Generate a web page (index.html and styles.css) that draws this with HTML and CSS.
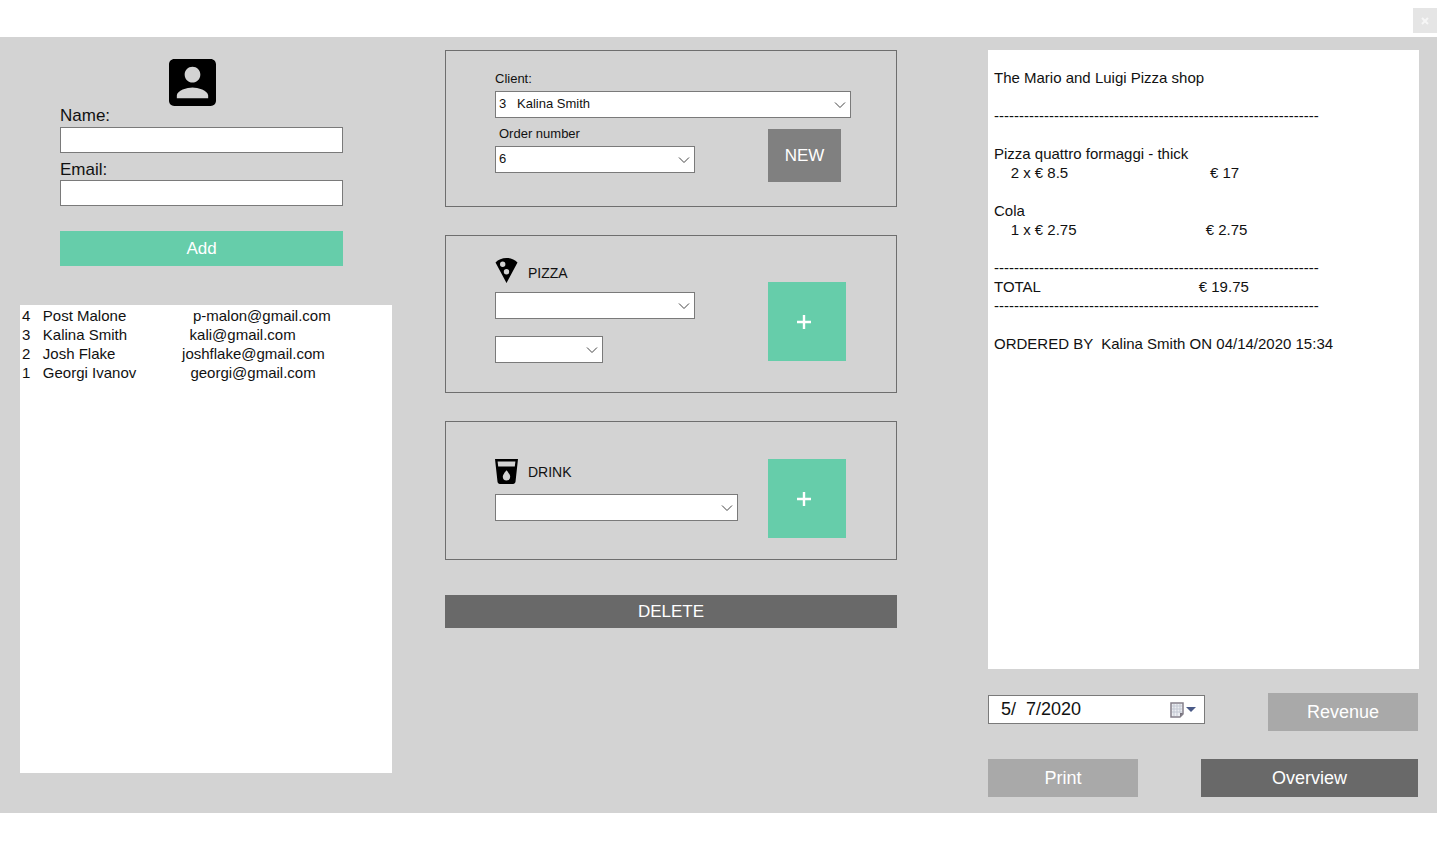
FILE: index.html
```
<!DOCTYPE html>
<html lang="en">
<head>
<meta charset="utf-8">
<title>The Mario and Luigi Pizza shop</title>
<meta name="viewport" content="width=device-width, initial-scale=1">
<link rel="stylesheet" href="styles.css">
</head>
<body>
<header class="titlebar">
  <button class="close" type="button" aria-label="Close"><svg viewBox="0 0 8 8" aria-hidden="true"><path d="M1 1l6 6M7 1L1 7"/></svg></button>
</header>
<main class="workspace">
  <section class="clients">
    <form class="client-form">
      <svg class="avatar" viewBox="3 3 18 18" aria-hidden="true"><path d="M3 5v14c0 1.1.9 2 2 2h14c1.1 0 2-.9 2-2V5c0-1.1-.9-2-2-2H5c-1.1 0-2 .9-2 2zm12 4c0 1.66-1.34 3-3 3s-3-1.34-3-3 1.34-3 3-3 3 1.34 3 3zm-9 8c0-2 4-3.1 6-3.1s6 1.1 6 3.1v1H6v-1z"/></svg>
      <label class="form-label" for="name">Name:</label>
      <input class="field" id="name" type="text">
      <label class="form-label" for="email">Email:</label>
      <input class="field" id="email" type="text">
      <button class="btn btn-add" type="button">Add</button>
    </form>
    <select class="client-list" size="20" aria-label="Clients">
      <option>4&nbsp;&nbsp; Post Malone&nbsp;&nbsp;&nbsp;&nbsp;&nbsp;&nbsp;&nbsp;&nbsp;&nbsp;&nbsp;&nbsp;&nbsp;&nbsp;&nbsp;&nbsp; p-malon@gmail.com</option>
      <option>3&nbsp;&nbsp; Kalina Smith&nbsp;&nbsp;&nbsp;&nbsp;&nbsp;&nbsp;&nbsp;&nbsp;&nbsp;&nbsp;&nbsp;&nbsp;&nbsp;&nbsp; kali@gmail.com</option>
      <option>2&nbsp;&nbsp; Josh Flake&nbsp;&nbsp;&nbsp;&nbsp;&nbsp;&nbsp;&nbsp;&nbsp;&nbsp;&nbsp;&nbsp;&nbsp;&nbsp;&nbsp;&nbsp; joshflake@gmail.com</option>
      <option>1&nbsp;&nbsp; Georgi Ivanov&nbsp;&nbsp;&nbsp;&nbsp;&nbsp;&nbsp;&nbsp;&nbsp;&nbsp;&nbsp;&nbsp;&nbsp; georgi@gmail.com</option>
    </select>
  </section>

  <section class="order">
    <div class="panel">
      <label class="small-label" for="client">Client:</label>
      <div class="combo combo-client">
        <select id="client"><option>3&nbsp;&nbsp; Kalina Smith</option></select>
        <svg viewBox="0 0 12 8" aria-hidden="true"><path d="M1 1.5l5 5 5-5"/></svg>
      </div>
      <div class="panel-row order-row">
        <div>
          <label class="small-label label-inset" for="order">Order number</label>
          <div class="combo combo-medium">
            <select id="order"><option>6</option></select>
            <svg viewBox="0 0 12 8" aria-hidden="true"><path d="M1 1.5l5 5 5-5"/></svg>
          </div>
        </div>
        <button class="btn btn-new" type="button">NEW</button>
      </div>
    </div>

    <div class="panel panel-pizza">
      <div class="panel-row">
        <div class="picker">
          <div class="heading">
            <svg viewBox="0 0 22 25" aria-hidden="true"><path fill-rule="evenodd" d="M11 0C6.600 0 2.700 1.700 0 4.500L11 25 22 4.500C19.300 1.700 15.400 0 11 0zM4.500 6.200a2.700 2.700 0 1 1 5.400 0 2.700 2.700 0 0 1-5.400 0zM11 16.400a2.700 2.700 0 1 1 0-5.400 2.700 2.700 0 0 1 0 5.400z"/></svg>
            <label for="pizza">PIZZA</label>
          </div>
          <div class="combo combo-medium">
            <select id="pizza"><option></option></select>
            <svg viewBox="0 0 12 8" aria-hidden="true"><path d="M1 1.5l5 5 5-5"/></svg>
          </div>
          <div class="combo combo-small">
            <select aria-label="Crust"><option></option></select>
            <svg viewBox="0 0 12 8" aria-hidden="true"><path d="M1 1.5l5 5 5-5"/></svg>
          </div>
        </div>
        <button class="btn btn-plus btn-pizza" type="button" aria-label="Add pizza"><svg viewBox="0 0 16 16" aria-hidden="true"><path d="M8 1v14M1 8h14"/></svg></button>
      </div>
    </div>

    <div class="panel panel-drink">
      <div class="panel-row">
        <div class="picker">
          <div class="heading">
            <svg viewBox="0 0 23 25" aria-hidden="true"><path fill-rule="evenodd" d="M0 0l2.500 22.800C2.600 24 3.600 25 4.900 25h13.200c1.300 0 2.300-1 2.400-2.200L23 0H0zM11.500 21.500a3.700 3.700 0 0 1-3.700-3.700c0-2.500 3.700-6.600 3.700-6.600s3.700 4.100 3.700 6.600a3.700 3.700 0 0 1-3.700 3.700zM19.800 7.500H3.200l-.6-5h17.800z"/></svg>
            <label for="drink">DRINK</label>
          </div>
          <div class="combo combo-drink">
            <select id="drink"><option></option></select>
            <svg viewBox="0 0 12 8" aria-hidden="true"><path d="M1 1.5l5 5 5-5"/></svg>
          </div>
        </div>
        <button class="btn btn-plus" type="button" aria-label="Add drink"><svg viewBox="0 0 16 16" aria-hidden="true"><path d="M8 1v14M1 8h14"/></svg></button>
      </div>
    </div>

    <button class="btn btn-delete" type="button">DELETE</button>
  </section>

  <section class="summary">
<pre class="receipt">The Mario and Luigi Pizza shop

-----------------------------------------------------------------

Pizza quattro formaggi - thick
    2 x € 8.5                                  € 17

Cola
    1 x € 2.75                               € 2.75

-----------------------------------------------------------------
TOTAL                                      € 19.75
-----------------------------------------------------------------

ORDERED BY  Kalina Smith ON 04/14/2020 15:34</pre>
    <div class="actions">
      <div class="date">
        <input type="text" value="5/  7/2020" aria-label="Date">
        <button type="button" aria-label="Open calendar">
          <svg viewBox="0 0 26 16" aria-hidden="true"><path d="M1 1h12v11l-3 3H1z" fill="#eceef2" stroke="#85808a" stroke-width="1.500"/><path d="M4 2v12M7 2v12M10 2v9M2 4h10M2 7h10M2 10h10" stroke="#c3c8d3" fill="none"/><path d="M13 11h-3v4z" fill="#77727c"/><path d="M16 5h10l-5 5z" fill="#4a5a87"/></svg>
        </button>
      </div>
      <button class="btn btn-light" type="button">Revenue</button>
    </div>
    <div class="actions">
      <button class="btn btn-light" type="button">Print</button>
      <button class="btn btn-overview" type="button">Overview</button>
    </div>
  </section>
</main>
</body>
</html>
```
FILE: styles.css
```
* { box-sizing: border-box; }

body {
  margin: 0;
  background: #fff;
  color: #111;
  font-family: "Liberation Sans", Arial, sans-serif;
  font-size: 15px;
}

svg { display: block; flex: none; }
button, input, select { font-family: inherit; color: inherit; border-radius: 0; }
button { padding: 0; border: 0; }

.titlebar { display: flex; justify-content: flex-end; padding: 8px 0 4px; }
.close {
  display: flex;
  align-items: center;
  justify-content: center;
  width: 24px;
  height: 25px;
  background: #e5e5e5;
}
.close svg { width: 8px; height: 8px; stroke: #f6f6f6; stroke-width: 2; }

.workspace {
  display: grid;
  grid-template-columns: 372fr 452fr 469fr;
  column-gap: 53px;
  padding: 13px 18px 16px 20px;
  background: #d3d3d3;
}

/* Clients */
.clients { display: flex; flex-direction: column; padding: 9px 0 24px; }
.client-form { display: flex; flex-direction: column; padding: 0 49px 0 40px; }
.avatar { width: 47px; height: 47px; margin-left: 109px; }
.form-label { font-size: 17px; line-height: 20px; }
.field {
  width: 100%;
  height: 26px;
  margin: 1px 0 7px;
  padding: 0 4px;
  border: 1px solid #7a7a7a;
  background: #fff;
  font-size: 17px;
}
.field:last-of-type { margin: 0 0 25px; }
.client-list {
  flex: 1;
  width: 100%;
  margin-top: 39px;
  padding: 2px 0;
  border: 0;
  background: #fff;
  font-size: 15px;
  overflow: hidden;
  outline: 0;
}
.client-list option { height: 19px; padding: 0 2px; line-height: 19px; }

/* Order */
.order { display: flex; flex-direction: column; gap: 28px; }
.panel { padding: 20px 45px 24px 49px; border: 1px solid #6e6e6e; }
.panel-pizza { padding: 22px 50px 29px 49px; }
.panel-drink { padding: 37px 50px 21px 49px; }
.panel-row { display: flex; justify-content: space-between; align-items: flex-start; }
.small-label { display: block; font-size: 13px; line-height: 16px; margin-bottom: 4px; }
.label-inset { padding-left: 4px; }
.order-row { padding: 8px 10px 0 0; }
.combo { display: grid; align-items: center; }
.combo select {
  grid-area: 1 / 1;
  width: 100%;
  height: 27px;
  padding: 0 24px 2px 3px;
  border: 1px solid #7a7a7a;
  background: #fff;
  font-size: 13px;
  appearance: none;
}
.combo svg {
  grid-area: 1 / 1;
  justify-self: end;
  width: 12px;
  height: 8px;
  margin-right: 5px;
  fill: none;
  stroke: #444;
  pointer-events: none;
}
.combo-medium { width: 200px; }
.combo-small { width: 108px; }
.combo-drink { width: 243px; }

.picker { display: flex; flex-direction: column; }
.picker .combo-small { margin-top: 17px; }
.heading {
  display: flex;
  align-items: center;
  gap: 10px;
  height: 30px;
  margin-bottom: 4px;
  font-size: 14px;
}
.heading svg { align-self: flex-start; width: 23px; height: 25px; }
.panel-drink .heading { height: 26px; margin-bottom: 9px; }

.btn { font-size: 17px; color: #fff; }
.btn-add { height: 35px; background: #66cdaa; }
.btn-new { width: 73px; height: 53px; margin-top: 3px; background: #808080; }
.btn-plus {
  display: flex;
  align-items: center;
  justify-content: center;
  width: 78px;
  height: 79px;
  padding-right: 6px;
  background: #66cdaa;
}
.btn-plus svg { width: 16px; height: 16px; stroke: #fff; stroke-width: 2.4; }
.btn-pizza { margin-top: 24px; }
.btn-delete { height: 33px; margin-top: 7px; background: #696969; }

/* Summary */
.summary { display: flex; flex-direction: column; padding-left: 38px; }
.receipt {
  flex: 1;
  min-height: 619px;
  margin: 0 0 24px;
  padding: 18px 6px;
  background: #fff;
  font-family: inherit;
  font-size: 15px;
  line-height: 19px;
}
.actions { display: flex; justify-content: space-between; align-items: center; margin-right: 1px; }
.actions + .actions { margin-top: 28px; }
.actions .btn { height: 38px; }
.btn-light { width: 150px; background: #a9a9a9; font-size: 18px; }
.btn-overview { width: 217px; background: #696969; font-size: 18px; }
.date {
  display: flex;
  align-items: center;
  width: 217px;
  height: 29px;
  margin-bottom: 5px;
  padding: 0 8px 0 12px;
  border: 1px solid #7a7a7a;
  background: #fff;
}
.date input { flex: 1; min-width: 0; padding: 0; border: 0; font-size: 18px; }
.date button { background: none; }
.date svg { width: 26px; height: 16px; }
```
